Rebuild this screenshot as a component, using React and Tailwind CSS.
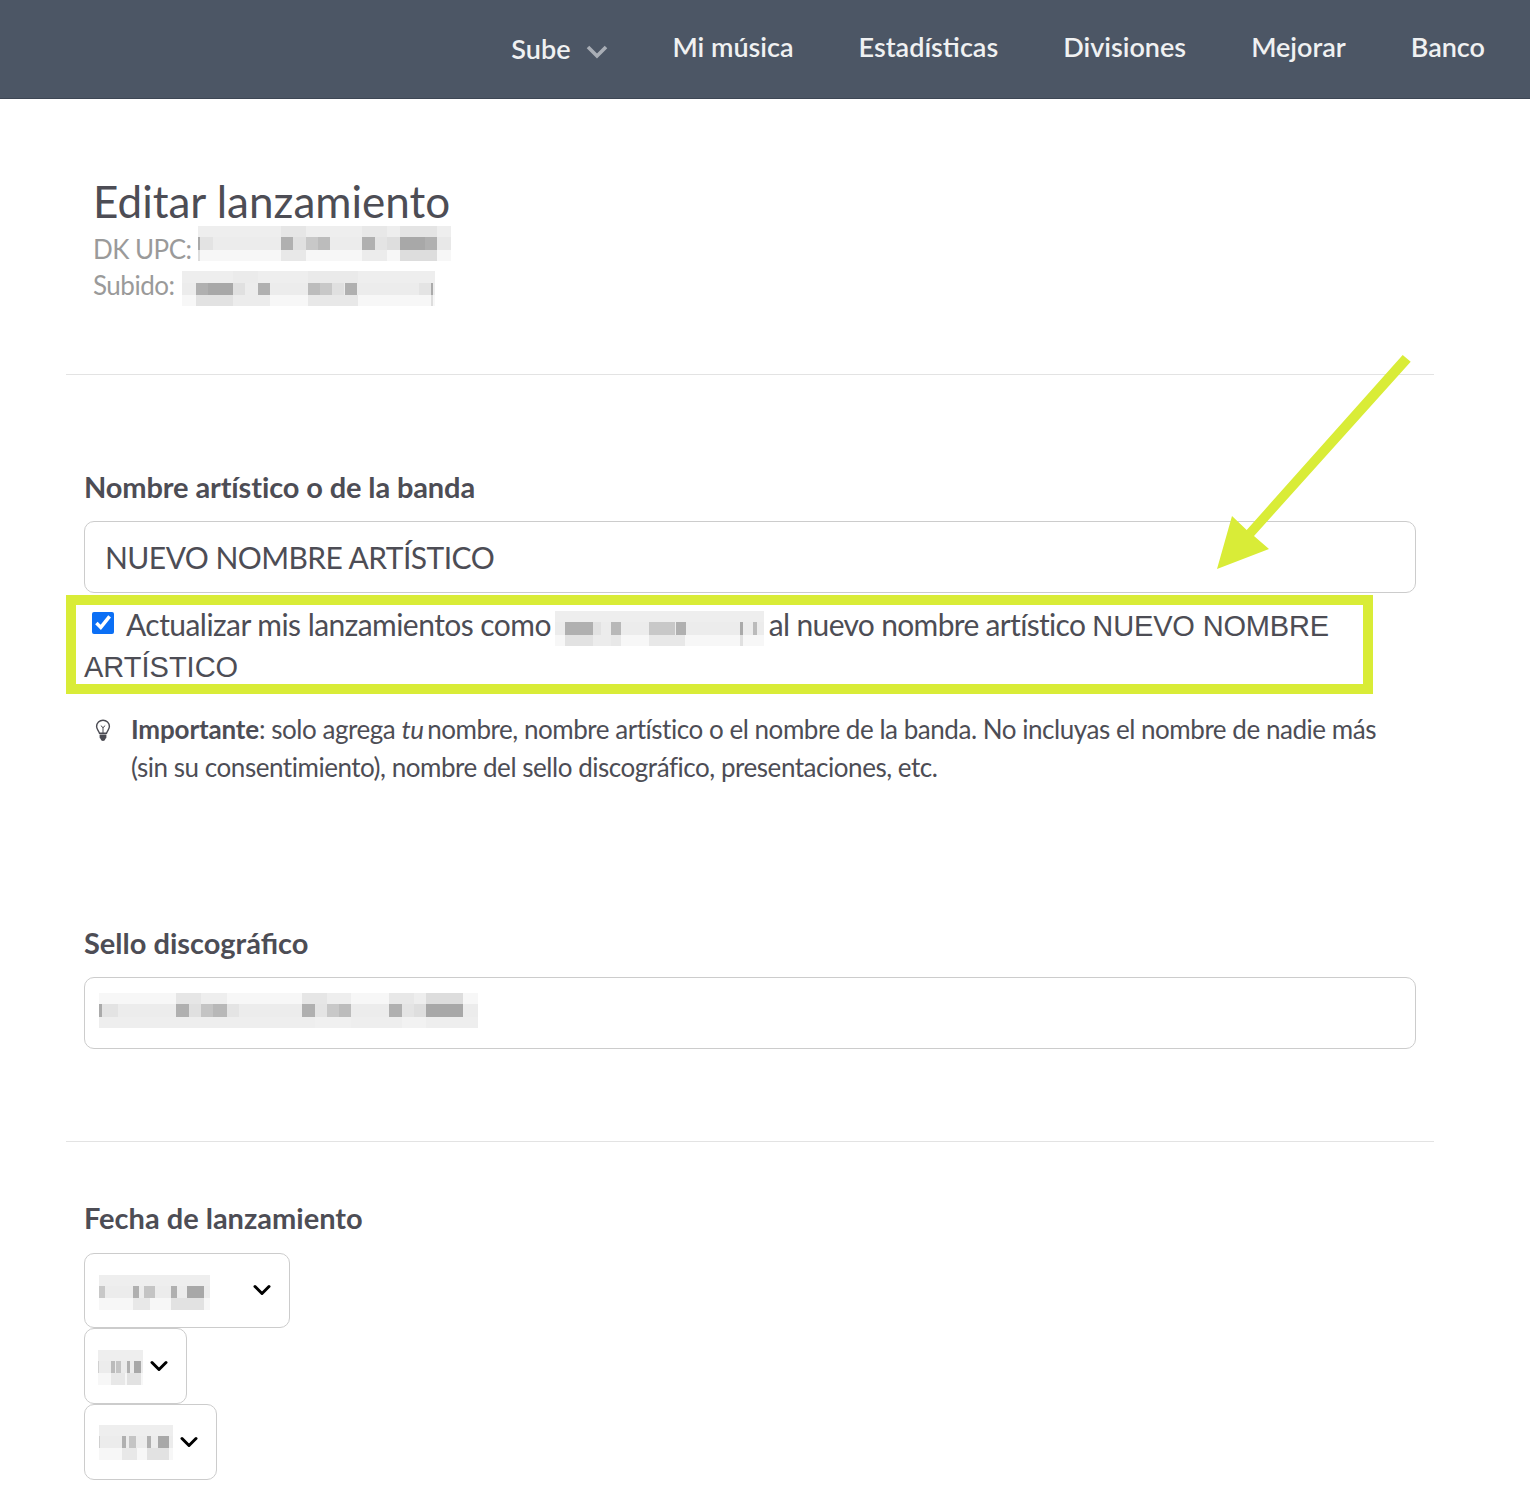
const upc = {
  w: 253,
  rows: [
    { h: 11, base: "#eeeeee", cells: [[83, 25, "#e6e6e6"], [164, 25, "#e8e8e8"], [202, 37, "#e4e4e4"]] },
    { h: 13, base: "#ececec", cells: [[0, 2, "#aaaaaa"], [2, 13, "#e3e3e3"], [83, 12, "#b0b0b0"], [95, 13, "#e0e0e0"], [108, 12, "#c8c8c8"], [120, 12, "#bcbcbc"], [164, 13, "#b0b0b0"], [177, 12, "#e4e4e4"], [189, 13, "#dedede"], [202, 25, "#a8a8a8"], [227, 12, "#b0b0b0"], [239, 14, "#e8e8e8"]] },
    { h: 11, base: "#f7f7f7", cells: [[0, 2, "#dddddd"], [83, 25, "#e8e8e8"], [164, 25, "#ececec"], [202, 37, "#dddddd"]] },
  ],
}

const uploaded = {
  w: 253,
  rows: [
    { h: 12, base: "#eeeeee", cells: [[51, 25, "#ebebeb"], [126, 50, "#eaeaea"]] },
    { h: 12, base: "#ececec", cells: [[14, 12, "#b0b0b0"], [26, 25, "#a8a8a8"], [51, 12, "#e0e0e0"], [76, 12, "#b0b0b0"], [126, 12, "#bcbcbc"], [138, 12, "#c8c8c8"], [150, 12, "#e0e0e0"], [163, 12, "#b0b0b0"], [237, 12, "#e4e4e4"], [249, 2, "#aaaaaa"]] },
    { h: 11, base: "#f7f7f7", cells: [[14, 37, "#e2e2e2"], [51, 37, "#ececec"], [126, 50, "#e8e8e8"], [249, 2, "#dddddd"]] },
  ],
}

const oldName = {
  w: 209,
  rows: [
    { h: 11, base: "#eeeeee", cells: [] },
    { h: 13, base: "#ececec", cells: [[10, 28, "#b0b0b0"], [38, 8, "#e2e2e2"], [56, 10, "#b8b8b8"], [94, 26, "#c8c8c8"], [121, 10, "#b0b0b0"], [185, 3, "#aaaaaa"], [198, 4, "#bbbbbb"]] },
    { h: 11, base: "#f7f7f7", cells: [[10, 28, "#e2e2e2"], [38, 18, "#ececec"], [56, 10, "#e8e8e8"], [94, 36, "#e8e8e8"], [185, 3, "#e0e0e0"]] },
  ],
}

const label = {
  w: 379,
  rows: [
    { h: 11, base: "#f7f7f7", cells: [[77, 25, "#e6e6e6"], [102, 26, "#eeeeee"], [203, 25, "#e6e6e6"], [228, 24, "#eeeeee"], [290, 25, "#e8e8e8"], [315, 12, "#eeeeee"], [327, 37, "#dddddd"]] },
    { h: 13, base: "#ececec", cells: [[0, 3, "#aaaaaa"], [3, 16, "#e3e3e3"], [77, 13, "#b0b0b0"], [90, 12, "#e0e0e0"], [102, 12, "#c4c4c4"], [114, 14, "#b8b8b8"], [128, 12, "#e4e4e4"], [203, 13, "#b0b0b0"], [216, 12, "#e4e4e4"], [228, 12, "#c8c8c8"], [240, 12, "#bcbcbc"], [290, 13, "#b0b0b0"], [303, 12, "#e4e4e4"], [315, 12, "#dedede"], [327, 37, "#a8a8a8"]] },
    { h: 11, base: "#eeeeee", cells: [[216, 36, "#f0f0f0"], [303, 24, "#f2f2f2"]] },
  ],
}

const month = {
  w: 111,
  rows: [
    { h: 11, base: "#eeeeee", cells: [] },
    { h: 12, base: "#ececec", cells: [[0, 6, "#c8c8c8"], [34, 6, "#b0b0b0"], [45, 11, "#c4c4c4"], [72, 6, "#b0b0b0"], [88, 17, "#a8a8a8"]] },
    { h: 12, base: "#f7f7f7", cells: [[34, 17, "#e8e8e8"], [72, 33, "#e2e2e2"]] },
  ],
}

const day = {
  w: 45,
  rows: [
    { h: 11, base: "#eeeeee", cells: [] },
    { h: 12, base: "#ececec", cells: [[0, 1, "#d0d0d0"], [13, 4, "#bbbbbb"], [18, 5, "#c4c4c4"], [29, 3, "#b0b0b0"], [36, 7, "#a8a8a8"]] },
    { h: 12, base: "#f7f7f7", cells: [[13, 14, "#e8e8e8"], [29, 14, "#e2e2e2"]] },
  ],
}

const year = {
  w: 74,
  rows: [
    { h: 11, base: "#eeeeee", cells: [] },
    { h: 12, base: "#ececec", cells: [[0, 1, "#d0d0d0"], [23, 4, "#b0b0b0"], [30, 7, "#c4c4c4"], [48, 4, "#b0b0b0"], [59, 11, "#a8a8a8"]] },
    { h: 12, base: "#f7f7f7", cells: [[23, 15, "#e8e8e8"], [48, 22, "#e2e2e2"]] },
  ],
}

// pixelated block that hides private values in the screenshot
const Redacted = ({ data, className = "" }) => {
  const height = data.rows.reduce((sum, row) => sum + row.h, 0)
  let y = 0
  return (
    <svg width={data.w} height={height} viewBox={`0 0 ${data.w} ${height}`} shapeRendering="crispEdges" className={`shrink-0 ${className}`}>
      {data.rows.map((row, i) => {
        const top = y
        y += row.h
        return (
          <g key={i}>
            <rect x="0" y={top} width={data.w} height={row.h} fill={row.base} />
            {row.cells.map(([x, w, color]) => (
              <rect key={x} x={x} y={top} width={w} height={row.h} fill={color} />
            ))}
          </g>
        )
      })}
    </svg>
  )
}

const Chevron = ({ className = "" }) => (
  <svg width="18" height="12" viewBox="0 0 18 12" fill="none" stroke="#000" strokeWidth="3" strokeLinecap="round" strokeLinejoin="round" className={className}>
    <path d="M2 2.5l7 7 7-7" />
  </svg>
)

const Bulb = () => (
  <svg width="16" height="23" viewBox="0 0 16 23" fill="none" className="shrink-0 mt-[9px] ml-[11px]">
    <path d="M8 1.2a6.4 6.4 0 0 0-6.4 6.4c0 2.6 2 3.8 2.9 6.6h7c.9-2.8 2.9-4 2.9-6.6A6.4 6.4 0 0 0 8 1.2z" stroke="#4a4a52" strokeWidth="1.4" />
    <path d="M8 14V8M5.8 6.6 8 8.6l2.2-2" stroke="#4a4a52" strokeWidth="1" />
    <path d="M4.6 15.4h6.8v3.2c0 .6-.5 1-1 1.2-.3 1.4-1.2 2.2-2.4 2.2s-2.1-.8-2.4-2.2c-.5-.2-1-.6-1-1.2z" fill="#4a4a52" />
  </svg>
)

const navItems = ["Mi música", "Estadísticas", "Divisiones", "Mejorar", "Banco"]

const App = () => {
  return (
    <div className="relative h-[1510px] bg-white font-['Lato','Liberation_Sans',sans-serif] text-[#4d4d55]">
      <nav className="h-[99px] bg-[#4c5665] border-b border-[#3d4654] flex justify-end gap-[65px] pr-[45px] pt-[27px] text-[27px] leading-[40px] font-semibold text-[#f0f1f2]">
        <div className="flex items-start mt-[2px]">
          <span>Sube</span>
          <svg width="22" height="14" viewBox="0 0 22 14" fill="none" stroke="#a9aeb6" strokeWidth="3.6" className="ml-[15px] mt-[16px]">
            <path d="M2 2l9 9 9-9" />
          </svg>
        </div>
        {navItems.map((item) => (
          <a key={item}>{item}</a>
        ))}
      </nav>

      <main className="w-[1368px] ml-[66px]">
        <header className="h-[276px] pl-[27px] pt-[75px] border-b border-[#e3e3e3]">
          <h1 className="text-[44px] leading-[54px] font-normal text-[#4d4d55]">Editar lanzamiento</h1>
          <div className="flex items-start h-[37px] -mt-[2px] text-[26px] leading-[37px] tracking-[-0.55px] text-[#9a9a9a]">
            <span className="mt-[5px]">DK UPC:</span>
            <Redacted data={upc} className="ml-[7px]" />
          </div>
          <div className="flex items-start h-[37px] mt-[8px] text-[26px] leading-[37px] tracking-[-0.5px] text-[#9a9a9a]">
            <span className="-mt-[4px]">Subido:</span>
            <Redacted data={uploaded} className="ml-[8px]" />
          </div>
        </header>

        <section className="px-[18px] pt-[90px] h-[767px] border-b border-[#e3e3e3]">
          <label className="block text-[29px] leading-[44px] font-bold tracking-[-0.12px]">Nombre artístico o de la banda</label>
          <div className="mt-[12px] h-[72px] rounded-[10px] border border-[#cccccc] pl-[20px] flex items-center text-[30px] tracking-[-0.55px]">
            NUEVO NOMBRE ARTÍSTICO
          </div>

          <div className="-ml-[18px] mt-[2px] w-[1307px] h-[99px] border-[10px] border-[#d9ec37] pl-[8px] text-[30px] leading-[42px]">
            <div className="flex items-start h-[42px] tracking-[-0.55px]">
              <input type="checkbox" defaultChecked readOnly className="w-[22px] h-[22px] ml-[8px] mt-[7px] shrink-0 accent-[#0b6ff5]" />
              <span className="ml-[12px] -mt-[2px] whitespace-nowrap">Actualizar mis lanzamientos como</span>
              <Redacted data={oldName} className="ml-[4px] mt-[6px]" />
              <span className="ml-[5px] -mt-[2px] whitespace-nowrap tracking-[-0.67px]">al nuevo nombre artístico <span className="font-['Liberation_Sans',sans-serif] text-[29px] tracking-[-0.15px]">NUEVO NOMBRE</span></span>
            </div>
            <div className="-mt-[1px] font-['Liberation_Sans',sans-serif] text-[29px]">ARTÍSTICO</div>
          </div>

          <div className="flex mt-[16px]">
            <Bulb />
            <p className="ml-[20px] text-[26px] leading-[38px] w-[1270px] tracking-[-0.46px]">
              <strong className="font-bold tracking-[-0.15px]">Importante</strong>: solo agrega <em>tu</em><span className="tracking-[-3px]"> </span>nombre, nombre artístico o el nombre de la banda. No incluyas el nombre de nadie más (sin su consentimiento), nombre del sello discográfico, presentaciones, etc.
            </p>
          </div>

          <label className="block mt-[135px] text-[29px] leading-[44px] font-bold">Sello discográfico</label>
          <div className="mt-[12px] h-[72px] rounded-[10px] border border-[#cccccc] pl-[14px] pt-[15px]">
            <Redacted data={label} />
          </div>
        </section>

        <section className="px-[18px] pt-[54px]">
          <label className="block text-[29px] leading-[44px] font-bold">Fecha de lanzamiento</label>
          <div className="mt-[13px] flex flex-col items-start">
            <div className="w-[206px] h-[75px] rounded-[10px] border border-[#cccccc] pl-[14px] pr-[18px] flex items-center justify-between">
              <Redacted data={month} className="mt-[4px]" />
              <Chevron className="-mt-[2px]" />
            </div>
            <div className="w-[103px] h-[76px] rounded-[10px] border border-[#cccccc] pl-[13px] pr-[18px] flex items-center justify-between">
              <Redacted data={day} className="mt-[2px]" />
              <Chevron />
            </div>
            <div className="w-[133px] h-[76px] rounded-[10px] border border-[#cccccc] pl-[14px] pr-[18px] flex items-center justify-between">
              <Redacted data={year} />
              <Chevron />
            </div>
          </div>
        </section>
      </main>

      {/* annotation arrow over the form */}
      <svg width="230" height="230" viewBox="0 0 230 230" className="absolute left-[1200px] top-[350px] pointer-events-none">
        <path d="M202.7 5 L210.7 11.7 L54 186 L69 199 L17 219 L32 166 L46.7 180 Z" fill="#d9ec37" />
      </svg>
    </div>
  )
}

export default App
